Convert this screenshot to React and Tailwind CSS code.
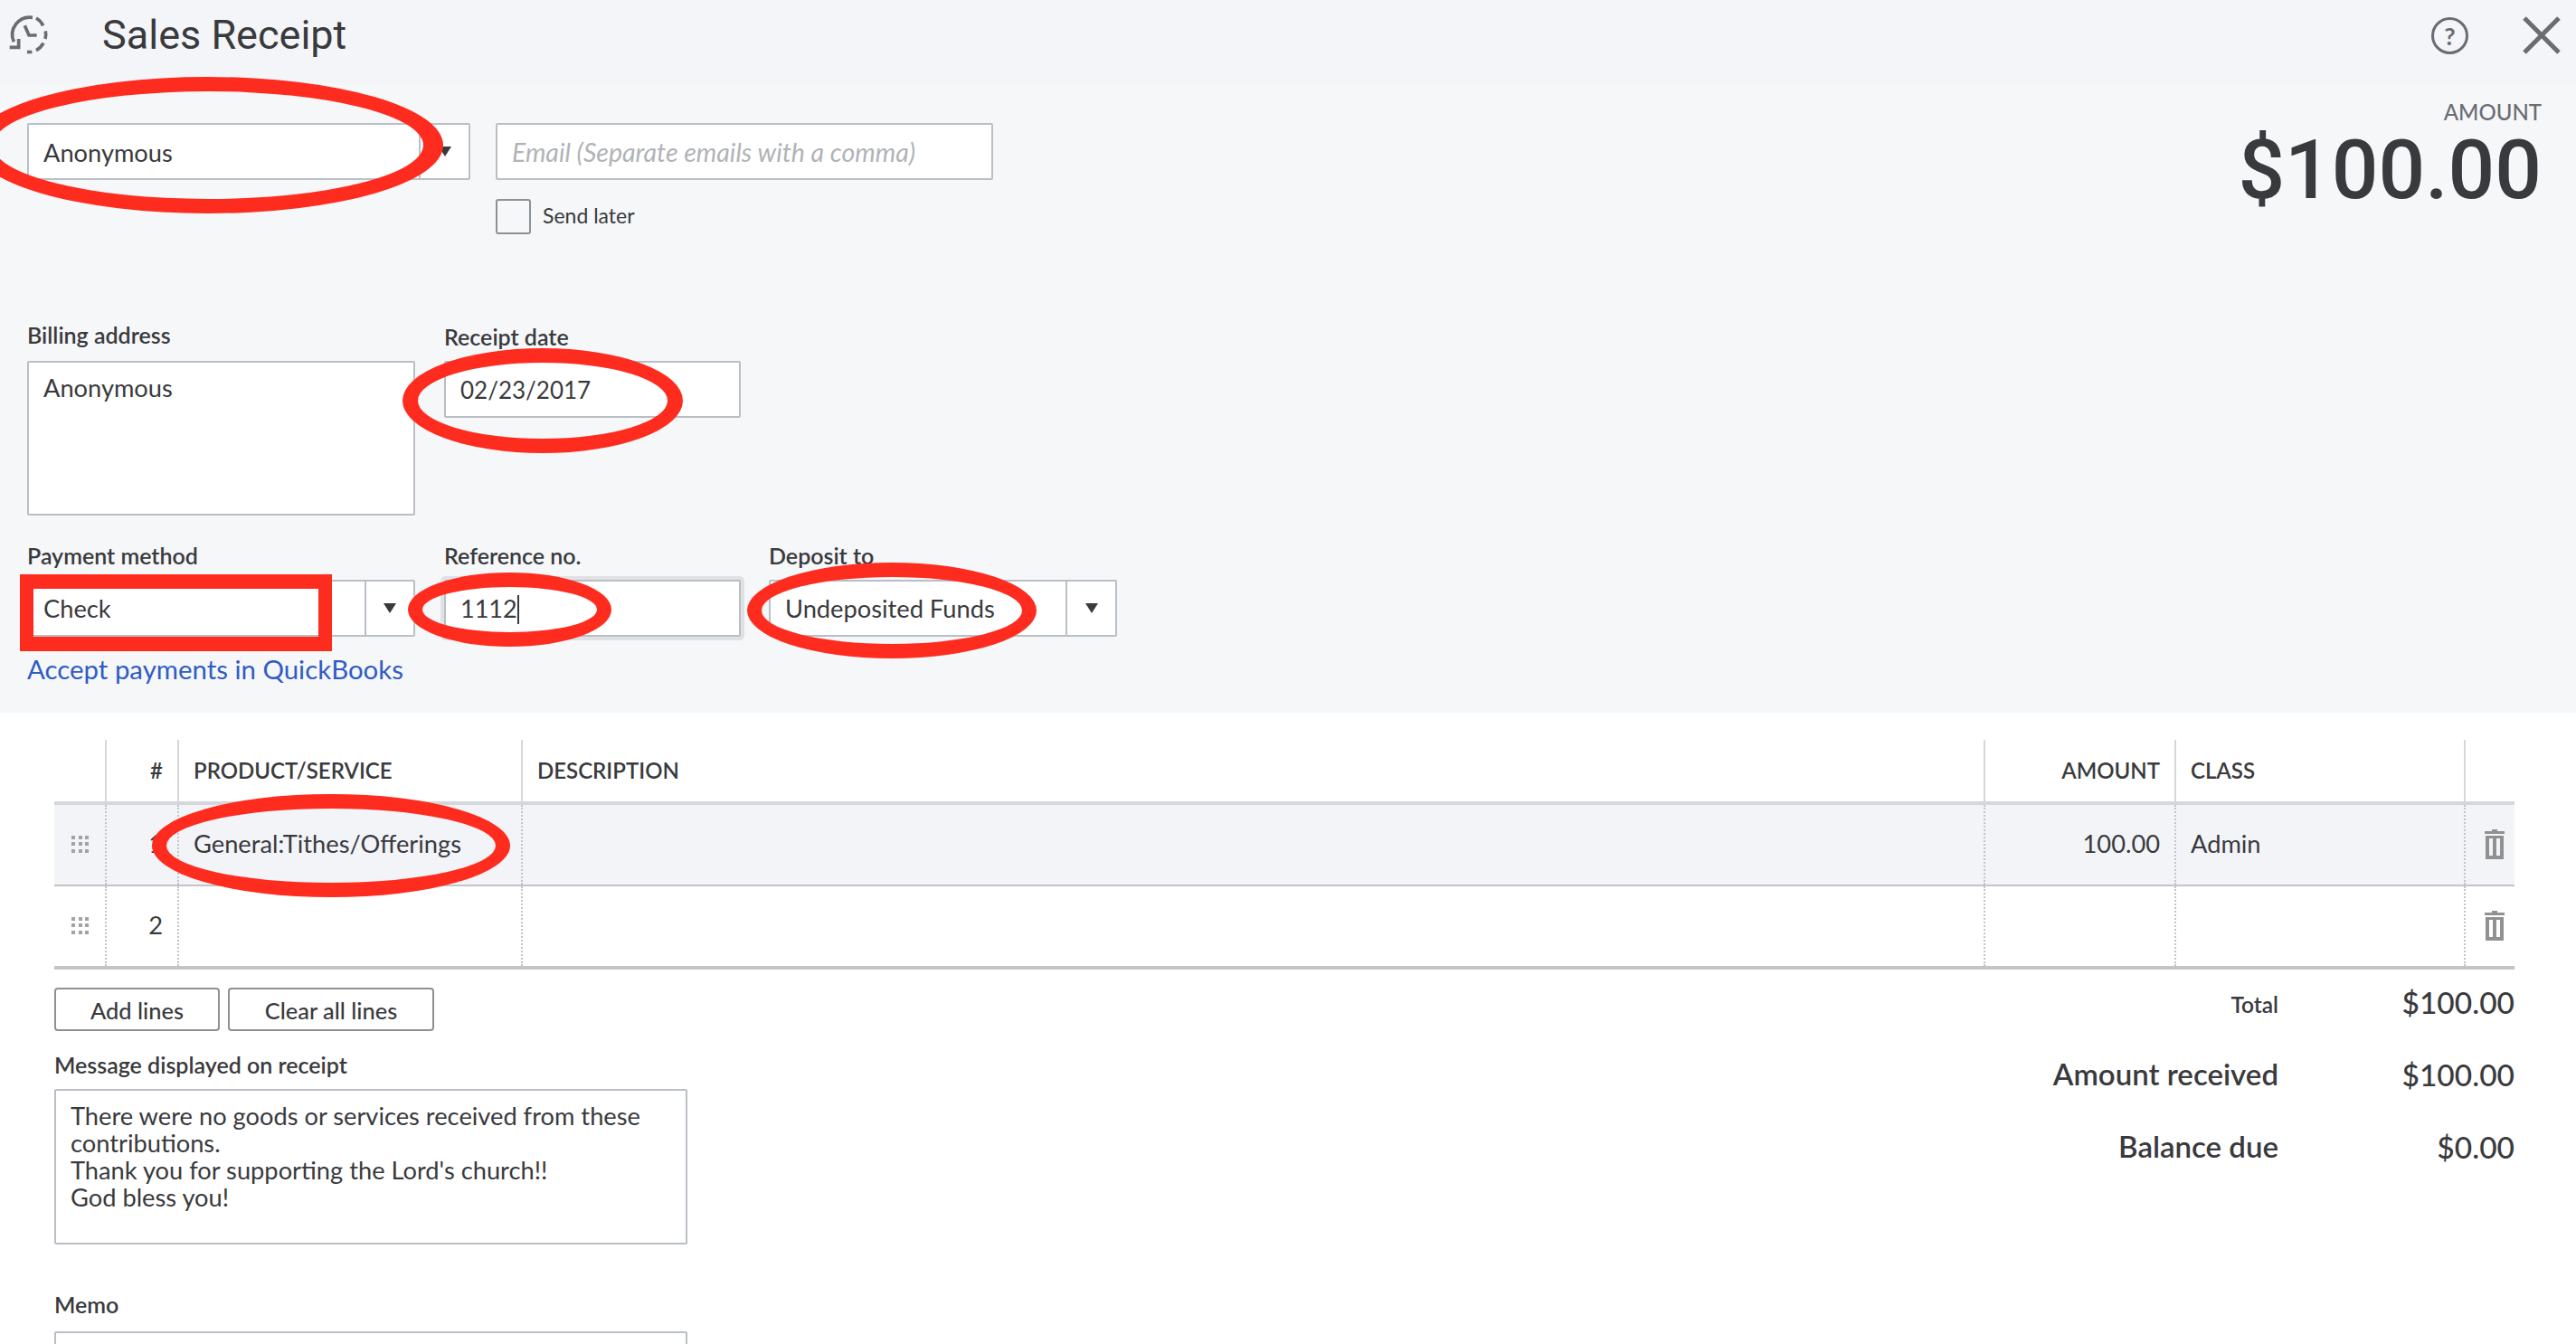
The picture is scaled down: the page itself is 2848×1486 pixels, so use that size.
const avenir = "font-['Lato','Noto_Sans',sans-serif]";

function Label({ children, className = "" }) {
  return <div className={`text-[25px] leading-[28px] font-semibold text-[#393a3d] ${className}`}>{children}</div>;
}

function Caret() {
  return <div className="h-0 w-0 border-x-[7px] border-t-[11px] border-x-transparent border-t-[#393a3d]" />;
}

function Combo({ value, w, divider, pad = "pt-[2px]" }) {
  return (
    <div className={`flex h-[63px] rounded-[2px] border-2 border-[#babec5] bg-white ${w}`}>
      <div className={`flex items-center pl-[16px] text-[27.25px] text-[#393a3d] ${pad} ${divider}`}>{value}</div>
      <div className="flex flex-1 items-center justify-center border-l-2 border-[#babec5]">
        <Caret />
      </div>
    </div>
  );
}

function HistoryIcon() {
  return (
    <svg width="70" height="60" viewBox="0 0 210 180" fill="none" stroke="#6b6c72" strokeWidth="11">
      <path d="M108 31A58 58 0 0 0 46 112" />
      <path d="M120 33A58 58 0 0 1 143 58" />
      <path d="M151 76A58 58 0 0 1 150 102" />
      <path d="M144 116A58 58 0 0 1 120 140" />
      <path d="M106 145A58 58 0 0 1 90 145" />
      <path d="M32 130H62V102" />
      <path d="M82 58L96 90H122" />
    </svg>
  );
}

function HelpIcon() {
  return (
    <div className="flex size-[41px] items-center justify-center rounded-full border-[3px] border-[#6b6c72] font-['Lato',sans-serif] text-[27px] leading-none font-bold text-[#6b6c72]">
      ?
    </div>
  );
}

function CloseIcon() {
  return (
    <svg width="42" height="42" viewBox="0 0 42 42" stroke="#6b6c72" strokeWidth="5">
      <path d="M2 2l38 38M40 2L2 40" />
    </svg>
  );
}

function TrashIcon() {
  return (
    <svg width="22" height="33" viewBox="0 0 22 33" fill="#919191">
      <path d="M8 0h6v2h8v3H0V2h8zM1 7h20v26H1zM5 10v19h4V10zm8 0v19h4V10z" fillRule="evenodd" />
    </svg>
  );
}

function DragDots() {
  return (
    <div className="grid w-[19px] grid-cols-3 gap-[3.5px]">
      {[0, 1, 2, 3, 4, 5, 6, 7, 8].map((i) => (
        <div key={i} className="size-[4px] bg-[#a3a3a3]" />
      ))}
    </div>
  );
}

const colsClass = "grid grid-cols-[56px_80px_380px_1617px_211px_320px_56px]";
const headCell = "flex h-full items-center border-l-2 border-[#d4d7dc] text-[24px] font-semibold text-[#393a3d]";
const rowCell = "flex h-full items-center border-l-2 border-dotted border-[#c4c4c4] pb-[2px] text-[27.25px] text-[#393a3d]";

function LineRow({ num, product, amount, cls, className }) {
  return (
    <div className={`${colsClass} ${className}`}>
      <div className="flex h-full items-center pb-[2px] pl-[19px]">
        <DragDots />
      </div>
      <div className={`${rowCell} justify-end pr-[16px]`}>{num}</div>
      <div className={`${rowCell} pl-[16px]`}>{product}</div>
      <div className={rowCell} />
      <div className={`${rowCell} justify-end pr-[16px]`}>{amount}</div>
      <div className={`${rowCell} pl-[16px]`}>{cls}</div>
      <div className={`${rowCell} pl-[21px]`}>
        <TrashIcon />
      </div>
    </div>
  );
}

function Ring({ className }) {
  return <div className={`pointer-events-none absolute rounded-[50%] border-[#fe2c1f] ${className}`} />;
}

export default function App() {
  return (
    <div className={`relative h-[1486px] w-[2848px] overflow-hidden bg-white ${avenir}`}>
      {/* header */}
      <div className="flex h-[92px] items-center bg-[#f4f5f8] pb-[14px]">
        <HistoryIcon />
        <div className="ml-[43px] font-['Roboto',sans-serif] text-[45px] text-[#393a3d]">Sales Receipt</div>
        <div className="ml-auto mr-[17px] flex items-center gap-[60px]">
          <HelpIcon />
          <CloseIcon />
        </div>
      </div>

      {/* top form */}
      <div className="flex h-[696px] flex-col bg-[#f6f7f9] pl-[30px]">
        <div className="flex h-[266px] justify-between pr-[38px] pt-[44px]">
          <div className="flex gap-[28px]">
            <Combo value="Anonymous" w="w-[490px]" divider="w-[431px]" pad="pt-[4px]" />
            <div>
              <div className="flex h-[63px] w-[550px] items-center rounded-[2px] border-2 border-[#babec5] bg-white pl-[16px] pt-[2px] text-[28.5px] text-[#b0b3b8] italic">
                Email (Separate emails with a comma)
              </div>
              <div className="mt-[21px] flex items-center gap-[13px]">
                <div className="size-[39px] rounded-[3px] border-2 border-[#8d9096] bg-[#f6f7f9]" />
                <div className="pb-[2px] text-[23px] text-[#393a3d]">Send later</div>
              </div>
            </div>
          </div>
          <div className="-mt-[26px] flex flex-col items-end">
            <div className="text-[24px] leading-[28px] font-medium text-[#6b6c72]">AMOUNT</div>
            <div className="mt-[10px] font-['Roboto',sans-serif] text-[91px] leading-[80px] font-medium text-[#393a3d]">$100.00</div>
          </div>
        </div>

        <div className="flex gap-[32px]">
          <div>
            <Label className="-mt-[2px] h-[43px]">Billing address</Label>
            <div className="h-[171px] w-[429px] rounded-[2px] border-2 border-[#babec5] bg-white px-[16px] pt-[12px] text-[27.25px] leading-[32px] text-[#393a3d]">
              Anonymous
            </div>
          </div>
          <div>
            <Label className="h-[41px]">Receipt date</Label>
            <div className="flex h-[63px] w-[328px] items-center rounded-[2px] border-2 border-[#babec5] bg-white pl-[16px] pt-[2px] text-[26px] text-[#393a3d]">
              02/23/2017
            </div>
          </div>
        </div>

        <div className="mt-[30px] flex">
          <div>
            <Label className="h-[41px]">Payment method</Label>
            <Combo value="Check" w="w-[429px]" divider="w-[371px]" />
          </div>
          <div className="ml-[32px]">
            <Label className="h-[41px]">Reference no.</Label>
            <div className="flex h-[63px] w-[328px] items-center rounded-[2px] border-2 border-[#babec5] bg-white pl-[16px] pt-[2px] text-[27px] text-[#393a3d] shadow-[0_0_0_4px_#dfe1e5]">
              1112
              <div className="h-[32px] w-[2px] bg-[#393a3d]" />
            </div>
          </div>
          <div className="ml-[31px]">
            <Label className="h-[41px]">Deposit to</Label>
            <Combo value="Undeposited Funds" w="w-[385px]" divider="w-[326px]" />
          </div>
        </div>

        <div className="mt-[19px] text-[29.4px] leading-[34px] text-[#2f5cc4]">Accept payments in QuickBooks</div>
      </div>

      {/* line items */}
      <div className="pl-[60px] pr-[68px] pt-[30px]">
        <div className={`${colsClass} h-[72px] border-b-4 border-[#d4d7dc]`}>
          <div />
          <div className={`${headCell} justify-end pr-[16px]`}>#</div>
          <div className={`${headCell} pl-[16px]`}>PRODUCT/SERVICE</div>
          <div className={`${headCell} pl-[16px]`}>DESCRIPTION</div>
          <div className={`${headCell} justify-end pr-[16px]`}>AMOUNT</div>
          <div className={`${headCell} pl-[16px]`}>CLASS</div>
          <div className={headCell} />
        </div>
        <LineRow num="1" product="General:Tithes/Offerings" amount="100.00" cls="Admin" className="h-[90px] border-b-2 border-[#c4c4c4] bg-[#f3f4f8]" />
        <LineRow num="2" className="h-[92px] border-b-4 border-[#c4c4c4]" />

        <div className="flex justify-between">
          <div>
            <div className="mt-[20px] flex gap-[9px]">
              <div className="flex h-[48px] w-[183px] items-center justify-center rounded-[4px] border-2 border-[#8d9096] pt-[2px] text-[25.4px] font-medium text-[#393a3d]">Add lines</div>
              <div className="flex h-[48px] w-[228px] items-center justify-center rounded-[4px] border-2 border-[#8d9096] pt-[2px] text-[25.4px] font-medium text-[#393a3d]">Clear all lines</div>
            </div>
            <Label className="mt-[23px] h-[41px]">Message displayed on receipt</Label>
            <div className="h-[172px] w-[700px] rounded-[2px] border-2 border-[#babec5] bg-white px-[16px] pt-[13px] text-[27.25px] leading-[30px] text-[#393a3d]">
              There were no goods or services received from these contributions.
              <br />
              Thank you for supporting the Lord's church!!
              <br />
              God bless you!
            </div>
            <Label className="mt-[52px] h-[44px]">Memo</Label>
            <div className="h-[63px] w-[700px] rounded-[2px] border-2 border-[#babec5] bg-white" />
          </div>

          <div className="w-[600px] pt-[14px] text-[#393a3d]">
            <div className="flex h-[44px] items-center">
              <div className="w-[339px] pt-[6px] text-right text-[24.5px] font-semibold">Total</div>
              <div className="flex-1 text-right text-[33.5px] font-medium">$100.00</div>
            </div>
            <div className="mt-[36px] flex h-[44px] items-center text-[33.5px] font-medium">
              <div className="w-[339px] text-right text-[33px] font-semibold">Amount received</div>
              <div className="flex-1 text-right">$100.00</div>
            </div>
            <div className="mt-[36px] flex h-[44px] items-center text-[33.5px] font-medium">
              <div className="w-[339px] text-right text-[33px] font-semibold">Balance due</div>
              <div className="flex-1 text-right">$0.00</div>
            </div>
          </div>
        </div>
      </div>

      {/* red annotations drawn over the form */}
      <Ring className="-left-[30px] top-[85px] h-[151px] w-[520px] border-x-[22px] border-y-[16px]" />
      <Ring className="left-[445px] top-[385px] h-[116px] w-[310px] border-x-[17px] border-y-[16px]" />
      <Ring className="left-[451px] top-[633px] h-[82px] w-[225px] border-x-[16px] border-y-[16px]" />
      <Ring className="left-[826px] top-[622px] h-[106px] w-[320px] border-x-[16px] border-y-[16px]" />
      <Ring className="left-[168px] top-[878px] h-[114px] w-[396px] border-x-[16px] border-y-[16px]" />
      <div className="pointer-events-none absolute left-[22px] top-[635px] h-[85px] w-[345px] border-x-[15px] border-y-[16px] border-[#fe2c1f]" />
    </div>
  );
}
